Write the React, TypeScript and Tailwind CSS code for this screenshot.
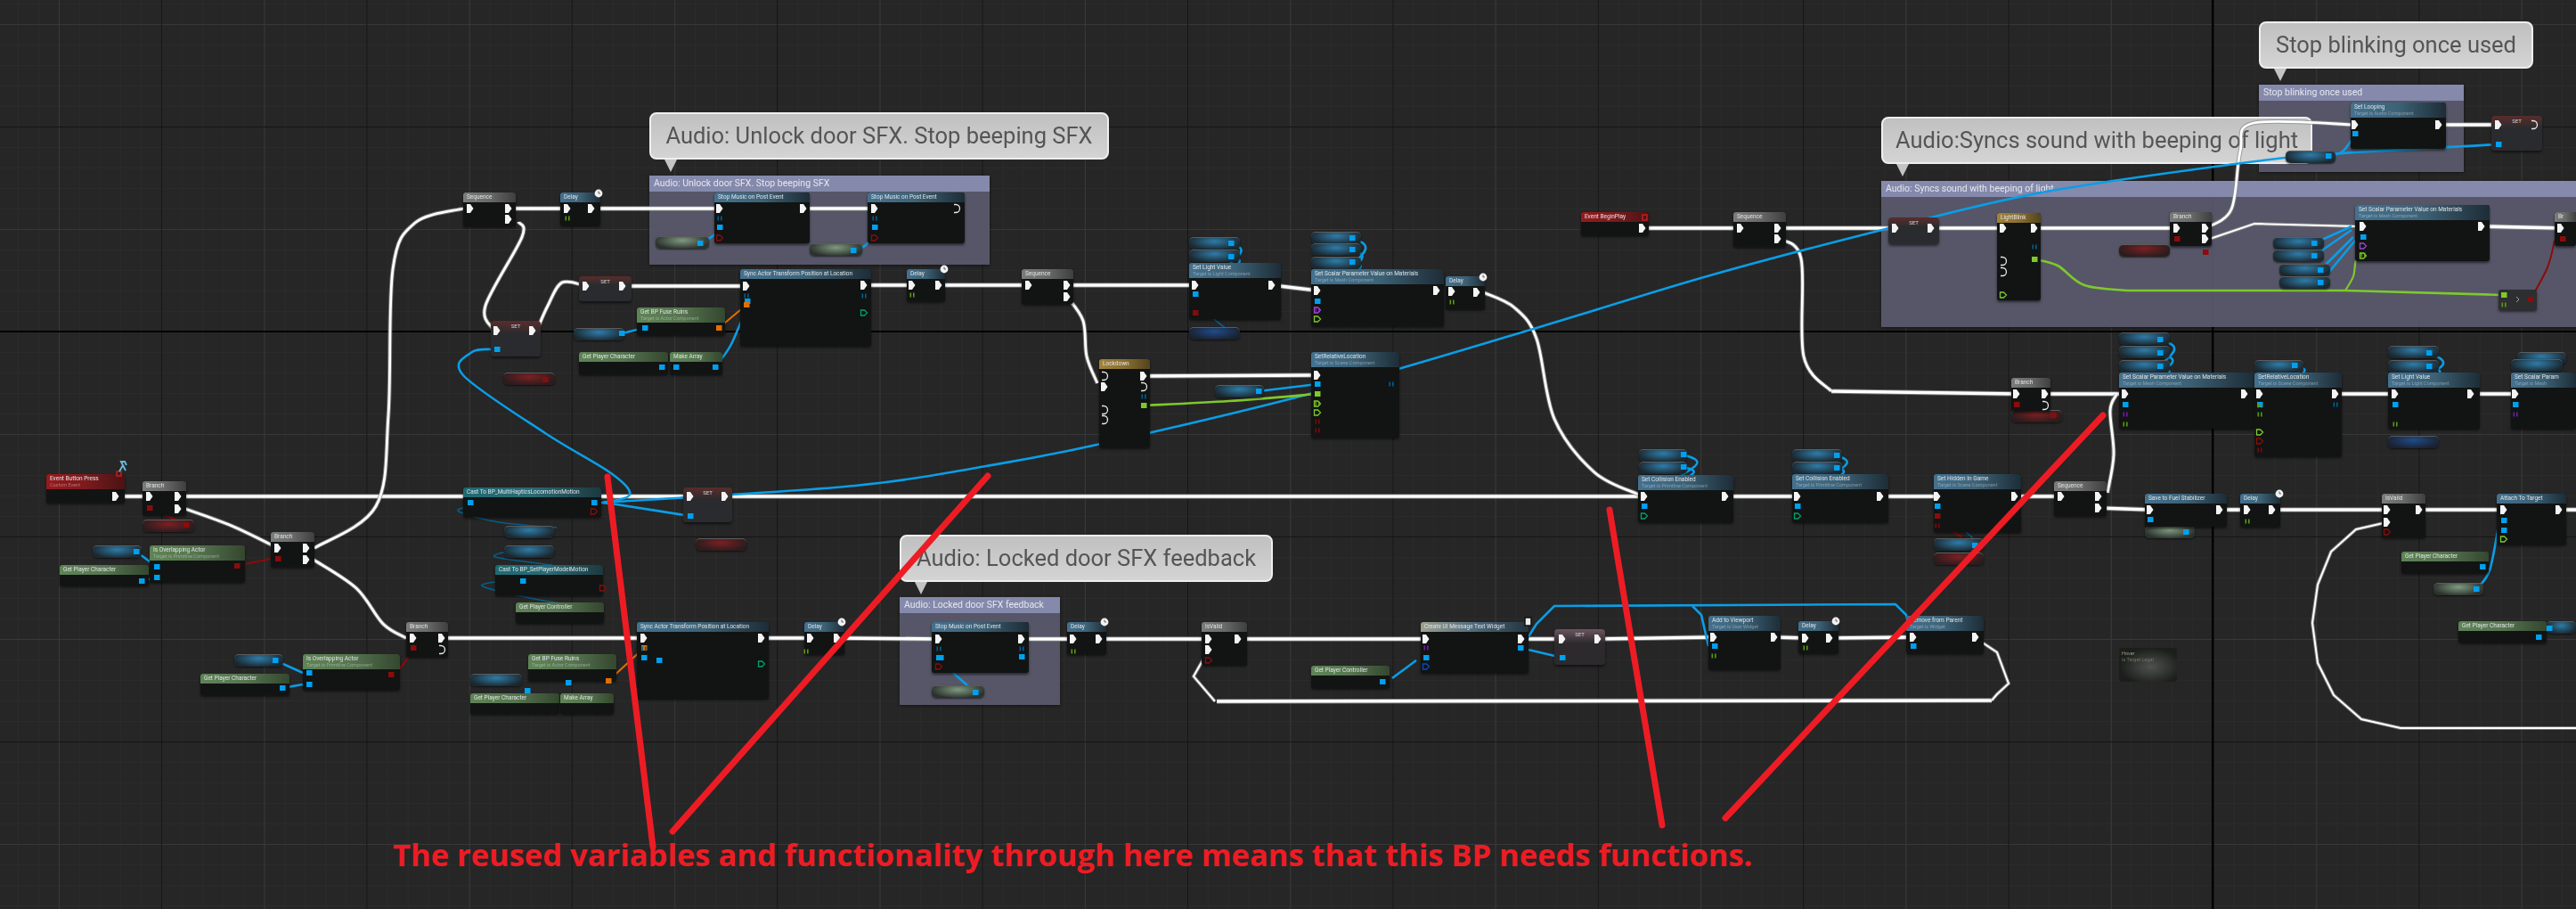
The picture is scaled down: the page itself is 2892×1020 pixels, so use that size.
import React from "react"

type Kind = "blue" | "green" | "gray" | "event" | "teal" | "yellow" | "white"
type BoxNode = [number, number, number, number, Kind, string, string?]
type Pt = [number, number]

const heads: Record<Kind, string> = {
    blue: "bg-gradient-to-r from-[#44718f] via-[#3d6277] to-[#1d2d37]",
    green: "bg-gradient-to-r from-[#5f8456] via-[#567550] to-[#34472f]",
    gray: "bg-gradient-to-r from-[#7b7b7b] via-[#6a6a6a] to-[#3f3f3f]",
    event: "bg-gradient-to-r from-[#96191d] via-[#7c1a1d] to-[#4a1315]",
    teal: "bg-gradient-to-r from-[#1f6a72] via-[#2a6a75] to-[#1d3940]",
    yellow: "bg-gradient-to-r from-[#a38438] via-[#8a6f30] to-[#54441d]",
    white: "bg-gradient-to-r from-[#9da18f] via-[#4f6a7c] to-[#24343f]",
}

const nodes: BoxNode[] = [
    [52, 532, 88, 32, "event", "Event Button Press", "Custom Event"],
    [160, 540, 49, 38, "gray", "Branch"],
    [168, 612, 107, 41, "green", "Is Overlapping Actor", "Target is Primitive Component"],
    [67, 634, 100, 23, "green", "Get Player Character"],
    [304, 597, 49, 39, "gray", "Branch"],
    [520, 216, 59, 38, "gray", "Sequence"],
    [629, 216, 45, 37, "blue", "Delay"],
    [802, 216, 107, 57, "blue", "Stop Music on Post Event"],
    [974, 216, 109, 57, "blue", "Stop Music on Post Event"],
    [715, 345, 99, 31, "green", "Get BP Fuse Ruins", "Target is Actor Component"],
    [650, 395, 100, 25, "green", "Get Player Character"],
    [752, 395, 59, 25, "green", "Make Array"],
    [831, 302, 147, 86, "blue", "Sync Actor Transform Position at Location"],
    [1018, 302, 43, 36, "blue", "Delay"],
    [1147, 302, 58, 39, "gray", "Sequence"],
    [1335, 295, 103, 63, "blue", "Set Light Value", "Target is Light Component"],
    [1472, 302, 149, 64, "blue", "Set Scalar Parameter Value on Materials", "Target is Mesh Component"],
    [1623, 310, 44, 37, "blue", "Delay"],
    [1234, 403, 57, 99, "yellow", "Lockdown"],
    [1472, 395, 99, 96, "blue", "SetRelativeLocation", "Target is Scene Component"],
    [1046, 698, 109, 57, "blue", "Stop Music on Post Event"],
    [1198, 698, 44, 36, "blue", "Delay"],
    [1349, 698, 51, 48, "gray", "IsValid"],
    [1595, 698, 121, 57, "white", "Create UI Message Text Widget"],
    [1472, 747, 88, 25, "green", "Get Player Controller"],
    [456, 698, 47, 39, "gray", "Branch"],
    [340, 734, 109, 40, "green", "Is Overlapping Actor", "Target is Primitive Component"],
    [225, 756, 100, 24, "green", "Get Player Character"],
    [520, 547, 155, 33, "teal", "Cast To BP_MultiHapticsLocomotionMotion"],
    [556, 634, 121, 34, "teal", "Cast To BP_SetPlayerModelMotion"],
    [579, 676, 99, 23, "green", "Get Player Controller"],
    [715, 698, 148, 86, "blue", "Sync Actor Transform Position at Location"],
    [593, 734, 99, 30, "green", "Get BP Fuse Ruins", "Target is Actor Component"],
    [528, 778, 100, 23, "green", "Get Player Character"],
    [629, 778, 60, 23, "green", "Make Array"],
    [903, 698, 45, 36, "blue", "Delay"],
    [2639, 115, 107, 52, "blue", "Set Looping", "Target is Audio Component"],
    [1775, 238, 76, 26, "event", "Event BeginPlay"],
    [1946, 238, 59, 39, "gray", "Sequence"],
    [2242, 239, 49, 98, "yellow", "LightBlink"],
    [2436, 238, 47, 38, "gray", "Branch"],
    [2644, 230, 151, 63, "blue", "Set Scalar Parameter Value on Materials", "Target is Mesh Component"],
    [2868, 238, 24, 38, "gray", "Br"],
    [2258, 424, 44, 37, "gray", "Branch"],
    [2379, 418, 152, 63, "blue", "Set Scalar Parameter Value on Materials", "Target is Mesh Component"],
    [2531, 418, 98, 94, "blue", "SetRelativeLocation", "Target is Scene Component"],
    [2681, 418, 103, 63, "blue", "Set Light Value", "Target is Light Component"],
    [2819, 418, 73, 63, "blue", "Set Scalar Param", "Target is Mesh"],
    [1839, 533, 107, 53, "blue", "Set Collision Enabled", "Target is Primitive Component"],
    [2012, 532, 108, 54, "blue", "Set Collision Enabled", "Target is Primitive Component"],
    [2171, 532, 98, 65, "blue", "Set Hidden In Game", "Target is Scene Component"],
    [2306, 540, 59, 39, "gray", "Sequence"],
    [2408, 554, 92, 37, "blue", "Save to Fuel Stabilizer"],
    [2515, 554, 45, 37, "blue", "Delay"],
    [2674, 554, 49, 49, "gray", "IsValid"],
    [2803, 554, 78, 57, "blue", "Attach To Target"],
    [2696, 619, 98, 24, "green", "Get Player Character"],
    [2760, 697, 99, 24, "green", "Get Player Character"],
    [1918, 691, 81, 60, "blue", "Add to Viewport", "Target is User Widget"],
    [2019, 697, 45, 36, "blue", "Delay"],
    [2140, 691, 87, 42, "blue", "Remove from Parent", "Target is Widget"],
]

const sets: [number, number, number, number, string?][] = [
    [650, 310, 59, 28],
    [551, 360, 56, 40],
    [767, 547, 55, 39],
    [1745, 706, 57, 40, "pink"],
    [2797, 130, 57, 39],
    [2120, 244, 57, 30],
]

// variable getters, [x, y, w, colour]
const pills: [number, number, number, "b" | "r" | "g" | "d"][] = [
    [160, 583, 58, "r"], [104, 612, 55, "b"], [736, 265, 60, "g"], [909, 273, 59, "g"],
    [565, 418, 58, "r"], [644, 368, 57, "b"], [1335, 266, 57, "b"], [1335, 280, 57, "b"],
    [1335, 367, 57, "d"], [1472, 260, 56, "b"], [1472, 273, 56, "b"], [1472, 288, 56, "b"],
    [1364, 432, 55, "b"], [1046, 769, 59, "g"], [263, 734, 55, "b"], [781, 604, 57, "r"],
    [566, 590, 56, "b"], [566, 612, 56, "b"], [528, 756, 58, "b"], [2566, 169, 56, "b"],
    [2379, 274, 57, "r"], [2552, 266, 57, "b"], [2552, 280, 57, "b"], [2559, 296, 57, "b"],
    [2559, 310, 57, "b"], [2258, 460, 57, "r"], [2379, 373, 57, "b"], [2379, 388, 57, "b"],
    [2379, 404, 57, "b"], [2531, 404, 55, "b"], [2681, 388, 57, "b"], [2681, 404, 57, "b"],
    [2681, 489, 57, "d"], [2826, 395, 55, "b"], [2819, 403, 58, "b"], [1840, 504, 54, "b"],
    [1840, 518, 54, "b"], [2012, 504, 56, "b"], [2012, 518, 56, "b"], [2171, 604, 56, "b"],
    [2171, 620, 56, "r"], [2408, 590, 56, "g"], [2732, 654, 56, "g"], [2859, 697, 33, "b"],
]

const comments = [
    { x: 729, y: 197, w: 382, h: 100, t: "Audio: Unlock door SFX. Stop beeping SFX" },
    { x: 1010, y: 670, w: 180, h: 121, t: "Audio: Locked door SFX feedback" },
    { x: 2536, y: 95, w: 230, h: 98, t: "Stop blinking once used" },
    { x: 2112, y: 203, w: 780, h: 164, t: "Audio: Syncs sound with beeping of light" },
]

const bubbles = [
    { x: 729, y: 126, w: 516, t: "Audio: Unlock door SFX. Stop beeping SFX" },
    { x: 1010, y: 600, w: 419, t: "Audio: Locked door SFX feedback" },
    { x: 2536, y: 24, w: 308, t: "Stop blinking once used" },
    { x: 2112, y: 131, w: 484, t: "Audio:Syncs sound with beeping of light" },
]

const clocks: Pt[] = [[672, 217], [1060, 302], [1665, 311], [945, 698], [1240, 698], [2061, 697], [2559, 554]]

const execPins: Pt[] = [
    [130, 557], [168, 557], [200, 557], [200, 571], [312, 615], [344, 615], [344, 628], [528, 234], [571, 234], [571, 246],
    [637, 234], [664, 234], [808, 234], [902, 234], [982, 234], [658, 321], [699, 321], [558, 371], [598, 371], [838, 321],
    [970, 320], [1024, 320], [1054, 320], [1155, 320], [1198, 320], [1198, 333], [1342, 320], [1428, 320], [1479, 326],
    [1613, 326], [1630, 327], [1658, 328], [1284, 422], [1479, 421], [1240, 434], [1846, 557], [1937, 557], [775, 557],
    [814, 557], [464, 716], [496, 716], [723, 716], [855, 716], [910, 716], [940, 716], [1054, 717], [1147, 717], [1205, 717],
    [1234, 717], [1357, 717], [1390, 717], [1357, 729], [1601, 717], [1708, 717], [1754, 717], [1794, 717], [1924, 715],
    [1992, 715], [2027, 716], [2054, 716], [2148, 715], [2218, 715], [2018, 557], [2111, 557], [2175, 557], [2262, 557],
    [2314, 557], [2356, 557], [2356, 570], [2414, 572], [2492, 572], [2523, 572], [2551, 572], [2680, 572], [2716, 572],
    [2680, 586], [2811, 572], [2873, 572], [1844, 256], [1954, 256], [1996, 256], [1996, 268], [2128, 256], [2168, 256],
    [2249, 256], [2284, 256], [2444, 256], [2476, 256], [2476, 268], [2653, 254], [2786, 254], [2644, 140], [2738, 140],
    [2805, 140], [2264, 442], [2296, 442], [2386, 442], [2520, 442], [2537, 442], [2622, 442], [2689, 442], [2774, 442],
    [2824, 442], [2875, 256],
]

const hollowPins: Pt[] = [
    [1074, 234], [2845, 140], [496, 729], [2296, 455], [1240, 422], [1240, 460], [1240, 471], [1284, 434], [2249, 293], [2249, 305],
]

// filled square data pins by colour
const squares: [string, Pt[]][] = [
    ["#00a0f0", [
        [808, 255], [982, 255], [786, 273], [958, 281], [724, 368], [698, 374], [743, 412], [759, 412], [803, 412], [558, 392],
        [528, 564], [667, 564], [775, 579], [153, 619], [176, 636], [176, 648], [159, 652], [309, 741], [347, 755],
        [347, 768], [317, 772], [723, 738], [839, 338], [1382, 273], [1382, 288], [1342, 330], [1518, 267], [1518, 280], [1518, 294],
        [1479, 338], [1413, 439], [1479, 431], [1095, 777], [1054, 738], [1707, 727], [1754, 738], [1601, 738], [1552, 765],
        [2644, 150], [2614, 175], [2805, 162], [2653, 266], [2598, 273], [2598, 287], [2605, 303], [2605, 317], [2425, 381],
        [2425, 396], [2425, 411], [2386, 454], [2537, 454], [2576, 410], [2689, 454], [2727, 396], [2727, 411], [2824, 454],
        [2414, 583], [2454, 597], [2811, 584], [2811, 595], [2780, 661], [2787, 636], [2850, 715], [2862, 705], [1846, 568], [2018, 568],
        [2175, 568], [2217, 612], [1925, 725], [2148, 725], [1890, 510], [1890, 524], [2062, 511], [2062, 525], [1056, 738],
        [587, 652], [592, 775], [638, 766], [740, 741], [1147, 737],
    ]],
    ["#e07000", [[807, 368], [838, 342], [683, 764], [723, 727]]],
    ["#8a0c0c", [[168, 570], [209, 589], [266, 635], [312, 627], [439, 757], [464, 727], [612, 426], [1342, 351], [2476, 283], [2444, 268], [2264, 454], [2305, 466], [2841, 336], [2877, 268], [2175, 579]]],
    ["#7fc82c", [[2284, 291], [2811, 331], [1284, 455], [1479, 442]]],
]

// the split "=" pins, inputs with a default value
const pairs: [string, Pt[]][] = [
    ["#5a9a10", [[637, 245], [1024, 331], [1630, 339], [1205, 731], [905, 731], [2027, 727], [2523, 585], [1479, 453], [2537, 455], [2537, 465], [2653, 286], [2386, 476], [2689, 476], [1924, 736], [2811, 342]]],
    ["#005e96", [[808, 245], [982, 245], [838, 332], [970, 332], [1054, 728], [723, 728], [1147, 728], [1562, 431], [2622, 454], [1284, 445], [2284, 277]]],
    ["#701fa0", [[1601, 727], [2386, 465], [2824, 465], [1479, 348]]],
    ["#7c0a0a", [[1342, 351], [1479, 473], [1479, 483], [2537, 505], [2175, 590]]],
]

const hollowData: [string, Pt[]][] = [
    ["#8a0c0c", [[808, 267], [982, 267], [1054, 748], [1357, 741], [2680, 597], [667, 574], [677, 660], [2537, 495]]],
    ["#7fc82c", [[1479, 358], [1479, 453], [1479, 463], [2653, 287], [2811, 605], [2537, 485], [2249, 331]]],
    ["#a045d0", [[1479, 348], [2653, 276]]],
    ["#00a070", [[970, 351], [855, 745], [1846, 579], [2018, 579]]],
    ["#0a4ac0", [[1601, 748]]],
]

// straight runs of the exec wires, x1 y1 x2 y2
const execLines: number[][] = [
    [130, 557, 168, 557], [200, 557, 1840, 557], [1937, 557, 2175, 557], [2262, 557, 2314, 557], [2356, 570, 2414, 572],
    [2492, 572, 2523, 572], [2551, 572, 2680, 572], [2716, 572, 2811, 572], [2873, 572, 2892, 572], [1844, 256, 1954, 256],
    [1996, 256, 2128, 256], [2168, 256, 2249, 256], [2284, 256, 2444, 256], [2786, 254, 2875, 256], [2738, 140, 2805, 140],
    [2056, 439, 2264, 442], [2296, 442, 2386, 442], [2520, 442, 2537, 442], [2622, 442, 2689, 442], [2774, 442, 2824, 442],
    [699, 321, 838, 321], [970, 320, 1024, 320], [1054, 320, 1155, 320], [1198, 320, 1342, 320], [1428, 320, 1479, 326],
    [1284, 422, 1479, 421], [571, 234, 637, 234], [664, 234, 808, 234], [902, 234, 982, 234], [496, 716, 723, 716],
    [855, 716, 910, 716], [940, 716, 1054, 717], [1147, 717, 1205, 717], [1234, 717, 1357, 717], [1390, 717, 1601, 717],
    [1708, 717, 1754, 717], [1794, 717, 1924, 715], [1992, 715, 2027, 716], [2054, 716, 2148, 715], [2236, 786, 1366, 787],
]

const execCurves: Pt[][] = [
    [[353, 615], [422, 568], [436, 466], [441, 302], [466, 250], [520, 234]],
    [[582, 249], [586, 266], [545, 343], [554, 370]],
    [[603, 370], [615, 343], [631, 317], [658, 321]],
    [[208, 571], [260, 590], [312, 615]],
    [[352, 628], [400, 660], [430, 700], [456, 716]],
    [[1198, 333], [1216, 360], [1220, 400], [1232, 430]],
    [[1665, 328], [1700, 345], [1725, 380], [1745, 470], [1790, 530], [1840, 555]],
    [[1996, 268], [2022, 290], [2025, 400], [2056, 439]],
    [[2366, 553], [2373, 510], [2369, 461], [2376, 443]],
    [[2476, 256], [2505, 235], [2515, 170], [2530, 138], [2644, 140]],
]

const thinLines: Pt[][] = [
    [[2218, 715], [2227, 722], [2242, 732], [2255, 767], [2242, 779], [2236, 786]],
    [[1364, 787], [1340, 759], [1357, 729]],
    [[2892, 817], [2695, 817], [2651, 807], [2620, 780], [2602, 744], [2596, 699], [2602, 656], [2617, 619], [2645, 594], [2680, 586]],
    [[2481, 268], [2531, 251], [2645, 254]],
]

const blueCurves: Pt[][] = [
    [[677, 564], [692, 563], [960, 545], [1107, 523], [1236, 498], [1474, 441], [1725, 368], [1920, 309], [2125, 255], [2292, 216], [2509, 184], [2614, 173], [2805, 162]],
    [[558, 392], [530, 395], [520, 421], [612, 486], [686, 531], [707, 555], [677, 564]],
    [[677, 564], [692, 566], [775, 579]],
    [[803, 412], [820, 388], [836, 351]],
    [[786, 273], [800, 265], [808, 257]],
    [[958, 281], [972, 275], [982, 259]],
    [[153, 619], [176, 636]],
    [[159, 652], [176, 648]],
    [[309, 741], [340, 755]],
    [[317, 772], [340, 768]],
    [[698, 374], [724, 368]],
    [[1413, 439], [1479, 431]],
    [[2614, 175], [2630, 170], [2644, 151]],
    [[2780, 661], [2795, 640], [2806, 584]],
    [[1563, 761], [1590, 741]],
    [[1707, 727], [1754, 738]],
    [[1095, 777], [1070, 755]],
    [[2850, 715], [2862, 705]],
    [[1382, 273], [1392, 285], [1345, 325]],
    [[1382, 288], [1390, 296], [1345, 328]],
    [[1518, 267], [1532, 282], [1482, 330]],
    [[1518, 280], [1528, 292], [1482, 332]],
    [[1518, 294], [1526, 302], [1482, 334]],
    [[2598, 273], [2640, 254]],
    [[2598, 287], [2640, 258]],
    [[2605, 303], [2642, 266]],
    [[2605, 317], [2644, 270]],
    [[2425, 381], [2440, 395], [2388, 440]],
    [[2425, 396], [2438, 408], [2388, 442]],
    [[2425, 411], [2434, 420], [2388, 444]],
    [[2576, 410], [2586, 418], [2540, 442]],
    [[2727, 396], [2742, 410], [2692, 442]],
    [[2727, 411], [2738, 420], [2692, 444]],
    [[1890, 510], [1904, 522], [1850, 555]],
    [[1890, 524], [1900, 532], [1850, 558]],
    [[2062, 511], [2072, 522], [2022, 555]],
    [[2062, 525], [2068, 532], [2022, 558]],
]

const blueLines: Pt[][] = [
    [[1708, 727], [1725, 700], [1745, 680], [2128, 678], [2140, 690], [2148, 725]],
    [[1900, 680], [1910, 690], [1918, 725]],
]

const dimBlue: Pt[][] = [
    [[528, 568], [515, 574], [560, 586], [625, 592]],
    [[574, 618], [556, 625], [620, 634]],
    [[562, 652], [542, 658], [600, 672], [650, 680]],
    [[2414, 583], [2450, 595]],
    [[1342, 342], [1382, 373]],
    [[2175, 568], [2215, 604]],
]

const redWires: Pt[][] = [
    [[168, 570], [209, 589]],
    [[266, 635], [304, 627]],
    [[439, 757], [449, 750], [464, 730]],
    [[2841, 336], [2860, 300], [2868, 270]],
    [[2180, 590], [2202, 602]],
]

const smooth = (p: Pt[]) => {
    let d = `M${p[0][0]} ${p[0][1]}`
    for (let i = 0; i < p.length - 1; i++) {
        const a = p[Math.max(i - 1, 0)]
        const b = p[i]
        const c = p[i + 1]
        const e = p[Math.min(i + 2, p.length - 1)]
        d += ` C${b[0] + (c[0] - a[0]) / 6} ${b[1] + (c[1] - a[1]) / 6} ${c[0] - (e[0] - b[0]) / 6} ${c[1] - (e[1] - b[1]) / 6} ${c[0]} ${c[1]}`
    }
    return d
}

const poly = (p: Pt[]) => "M" + p.map((q) => q.join(" ")).join(" L")

const ExecPath = ({ d, w = 3.6 }: { d: string; w?: number }) => (
    <>
        <path d={d} fill="none" stroke="#8c8c8c" strokeOpacity="0.75" strokeWidth={w + 2} />
        <path d={d} fill="none" stroke="#ffffff" strokeWidth={w} />
    </>
)

const Wires = () => (
    <svg width="2892" height="1020" className="absolute left-0 top-0 blur-[0.4px]">
        {execLines.map((l, i) => (
            <ExecPath key={i} d={`M${l[0]} ${l[1]} L${l[2]} ${l[3]}`} />
        ))}
        {execCurves.map((c, i) => (
            <ExecPath key={i} d={smooth(c)} w={2.8} />
        ))}
        {thinLines.map((c, i) => (
            <ExecPath key={i} d={poly(c)} w={2} />
        ))}
        {blueCurves.map((c, i) => (
            <path key={i} d={smooth(c)} fill="none" stroke="#0a9ee6" strokeWidth="2.6" />
        ))}
        {blueLines.map((c, i) => (
            <path key={i} d={poly(c)} fill="none" stroke="#0a9ee6" strokeWidth="2.6" />
        ))}
        {dimBlue.map((c, i) => (
            <path key={i} d={smooth(c)} fill="none" stroke="#075d88" strokeWidth="1.6" />
        ))}
        {redWires.map((c, i) => (
            <path key={i} d={smooth(c)} fill="none" stroke="#8a0c0c" strokeWidth="2" />
        ))}
        <path d={smooth([[2284, 291], [2310, 298], [2340, 320], [2388, 326]])} fill="none" stroke="#7fc82c" strokeWidth="2.6" />
        <path d="M2388 326 L2633 326 L2810 331" fill="none" stroke="#7fc82c" strokeWidth="2.6" />
        <path d={smooth([[2633, 326], [2642, 310], [2645, 292], [2652, 287]])} fill="none" stroke="#7fc82c" strokeWidth="2.2" />
        <path d={smooth([[1284, 455], [1380, 450], [1479, 442]])} fill="none" stroke="#7fc82c" strokeWidth="2.6" />
        <path d="M807 368 L838 342" fill="none" stroke="#e07000" strokeWidth="2" />
        <path d="M683 764 L723 727" fill="none" stroke="#e07000" strokeWidth="2" />
    </svg>
)

const Pins = () => (
    <svg width="2892" height="1020" className="absolute left-0 top-0 blur-[0.4px]">
        {execPins.map(([x, y], i) => (
            <path key={i} d={`M${x - 4} ${y - 5} h4 l3.5 5 l-3.5 5 h-4 z`} fill="#f4f4f4" />
        ))}
        {hollowPins.map(([x, y], i) => (
            <path key={i} d={`M${x - 3} ${y - 4.5} h2 a4.5 4.5 0 0 1 0 9 h-2`} fill="none" stroke="#e8e8e8" strokeWidth="1.3" />
        ))}
        {squares.map(([c, pts]) =>
            pts.map(([x, y], i) => <rect key={c + i} x={x - 3} y={y - 3} width="6.5" height="6" fill={c} />),
        )}
        {pairs.map(([c, pts]) =>
            pts.map(([x, y], i) => (
                <path key={c + i} d={`M${x - 2.5} ${y - 2.5} v5 h1.6 v-5 z M${x + 1} ${y - 2.5} v5 h1.6 v-5 z`} fill={c} />
            )),
        )}
        {hollowData.map(([c, pts]) =>
            pts.map(([x, y], i) => (
                <path key={c + i} d={`M${x - 3.5} ${y - 3} h4 l3 3 l-3 3 h-4 z`} fill="none" stroke={c} strokeWidth="1.3" />
            )),
        )}
        {clocks.map(([x, y], i) => (
            <g key={i}>
                <circle cx={x} cy={y} r="4.4" fill="#f2f2f2" />
                <path d={`M${x} ${y - 2.6} V${y} H${x + 2}`} fill="none" stroke="#444" strokeWidth="0.8" />
            </g>
        ))}
        <rect x="131" y="529" width="5" height="5" fill="none" stroke="#e02020" strokeWidth="1.2" />
        <path d="M134 529 L138 522 L141 528 M138 522 L136 518 h4 l2 4" fill="none" stroke="#6bb6d8" strokeWidth="2" />
        <rect x="1844" y="241" width="5" height="6" fill="none" stroke="#e02020" strokeWidth="1.2" />
        <rect x="1712" y="693" width="7" height="9" fill="#eee" stroke="#111" strokeWidth="1.5" />
        <path d="M2825 333 l3 3 l-3 3" fill="none" stroke="#a0a0a0" strokeWidth="1" />
    </svg>
)

const Annotations = () => (
    <svg width="2892" height="1020" className="absolute left-0 top-0">
        <g stroke="#ed1c24" strokeWidth="7" strokeLinecap="round" fill="none">
            <path d="M682 535 L733 950" />
            <path d="M1109 534 L755 933" />
            <path d="M1807 572 L1866 926" />
            <path d="M2361 466 L1937 918" />
        </g>
    </svg>
)

export default function App() {
    return (
        <div className="relative h-[1020px] w-[2892px] overflow-hidden bg-[#262626] bg-[image:linear-gradient(to_right,#151515_1px,transparent_1px),linear-gradient(to_bottom,#151515_1px,transparent_1px),linear-gradient(to_right,#383838_1px,transparent_1px),linear-gradient(to_bottom,#383838_1px,transparent_1px),linear-gradient(to_right,#2b2b2b_1px,transparent_1px),linear-gradient(to_bottom,#2b2b2b_1px,transparent_1px)] bg-[size:230.4px_100%,100%_230px,230.4px_100%,100%_230px,23.04px_100%,100%_23px] bg-[position:181px_0,0_142px,66px_0,0_27px,20px_0,0_4px]">
            <div className="absolute left-[2483px] top-0 h-full w-[2px] bg-black" />
            <div className="absolute left-0 top-[371px] h-[2px] w-full bg-black" />

            {comments.map((c) => (
                <div
                    key={c.t}
                    className="absolute bg-[#58596c]/95 shadow-[0_1px_3px_rgba(0,0,0,0.5)]"
                    style={{ left: c.x, top: c.y, width: c.w, height: c.h }}
                >
                    <div className="h-[18px] truncate bg-[#858aac] px-[5px] font-['Roboto',sans-serif] text-[10.5px] leading-[18px] text-[#e6e6ee] blur-[0.4px]">
                        {c.t}
                    </div>
                </div>
            ))}

            {bubbles.map((b) => (
                <div key={b.t} className="absolute" style={{ left: b.x, top: b.y, width: b.w }}>
                    <div className="flex h-[53px] items-center justify-center rounded-[8px] border-2 border-[#eeeeee] bg-gradient-to-b from-[#c0c0c0] to-[#d4d4d4] font-['Roboto',sans-serif] text-[25.5px] text-[#555555] blur-[0.4px]">
                        {b.t}
                    </div>
                    <div className="ml-[17px] h-0 w-0 border-x-[7px] border-t-[14px] border-x-transparent border-t-[#c4c4c4]" />
                </div>
            ))}

            <Wires />

            {pills.map(([x, y, w, c], i) => (
                <div
                    key={i}
                    className={`absolute h-[14px] rounded-[5px] border-t border-[#5c5c5c] shadow-[0_1px_2px_rgba(0,0,0,0.6)] ${
                        c === "b"
                            ? "bg-[radial-gradient(ellipse_at_50%_30%,#2f7ca8,#1b2830_75%)]"
                            : c === "r"
                              ? "bg-[radial-gradient(ellipse_at_50%_30%,#7a2022,#2b1c1e_75%)]"
                              : c === "g"
                                ? "bg-[radial-gradient(ellipse_at_50%_30%,#7f9a80,#2b322d_75%)]"
                                : "bg-[radial-gradient(ellipse_at_50%_30%,#1f4c8a,#1a2230_75%)]"
                    }`}
                    style={{ left: x, top: y, width: w }}
                />
            ))}

            {nodes.map(([x, y, w, h, k, t, s], i) => (
                <div
                    key={i}
                    className="absolute overflow-hidden rounded-[3px] bg-[#111413] shadow-[0_2px_3px_rgba(0,0,0,0.55)]"
                    style={{ left: x, top: y, width: w, height: h }}
                >
                    <div
                        className={`flex flex-col justify-center overflow-hidden whitespace-nowrap px-[4px] font-['Roboto',sans-serif] leading-none ${heads[k]} ${s ? "h-[17px]" : "h-[11px]"}`}
                    >
                        <div className="text-[6.5px] text-[#dfe4e6] blur-[0.45px]">{t}</div>
                        {s && <div className="mt-[1px] text-[5.5px] text-white/35 blur-[0.45px]">{s}</div>}
                    </div>
                </div>
            ))}

            {sets.map(([x, y, w, h, v], i) => (
                <div
                    key={i}
                    className={`absolute rounded-[4px] text-center font-['Roboto',sans-serif] text-[6px] leading-[12px] text-[#cfcfcf] shadow-[0_2px_3px_rgba(0,0,0,0.55)] ${
                        v ? "bg-gradient-to-b from-[#6d5560] to-[#2c2a2d] to-40%" : "bg-gradient-to-b from-[#5a2c2c] to-[#2a2b2e] to-35%"
                    }`}
                    style={{ left: x, top: y, width: w, height: h }}
                >
                    SET
                </div>
            ))}

            {/* float compare node at the end of the green wire */}
            <div className="absolute left-[2805px] top-[325px] h-[23px] w-[43px] rounded-[3px] bg-[#2d2e30] shadow-[0_2px_3px_rgba(0,0,0,0.55)]" />

            <div className="absolute left-[2379px] top-[727px] h-[38px] w-[65px] rounded-[3px] bg-[radial-gradient(ellipse_at_55%_55%,#4e524e,#1c1e1c_70%)] px-[3px] pt-[3px] font-['Roboto',sans-serif] text-[5.5px] leading-[7px] text-[#9a9f90] blur-[0.4px]">
                <div>Hover</div>
                <div className="text-[#6f7563]">Is Target Legal</div>
            </div>

            <Pins />
            <Annotations />

            <div className="absolute left-[441px] top-[933px] whitespace-nowrap font-['Open_Sans',sans-serif] text-[34.5px] font-bold text-[#ed1c24]">
                The reused variables and functionality through here means that this BP needs functions.
            </div>
        </div>
    )
}
